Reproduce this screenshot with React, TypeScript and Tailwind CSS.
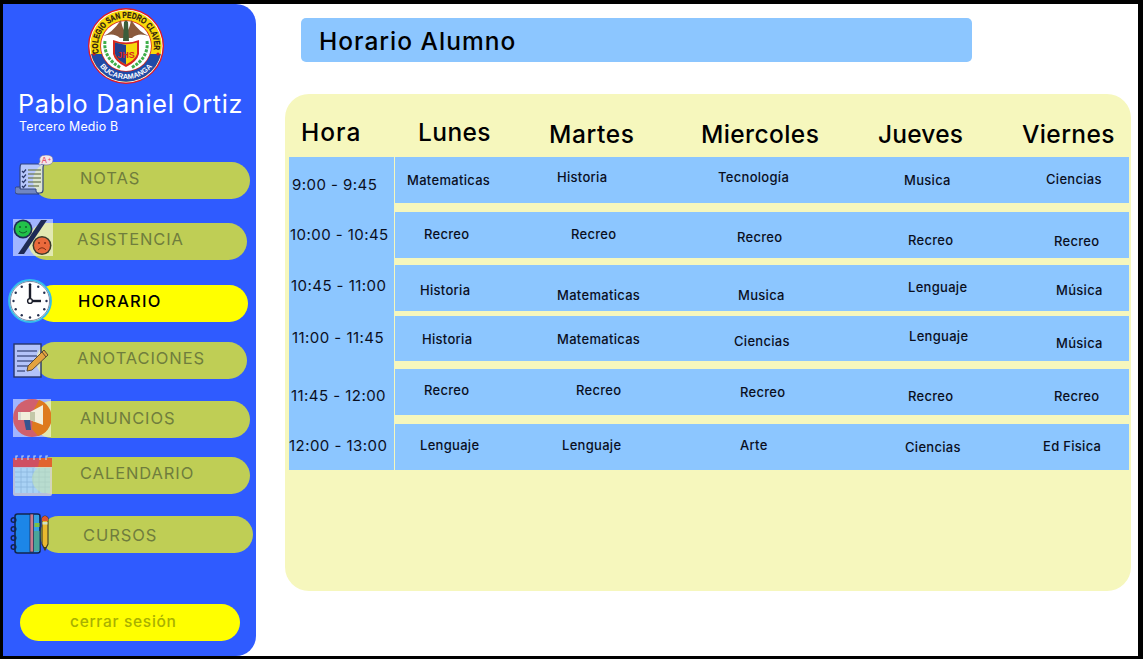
import React from "react";

function Logo() {
  return (
    <svg width="76" height="76" viewBox="0 0 76 76" className="block">
      <defs>
        <path id="logoTop" d="M11.2 46 A28 28 0 1 1 64.8 46" fill="none" />
        <path id="logoBottom" d="M10 56 A33.5 33.5 0 0 0 66 56" fill="none" />
        <clipPath id="logoLower"><rect x="0" y="46" width="76" height="30" /></clipPath>
      </defs>
      <circle cx="38" cy="38" r="38" fill="#e01b24" />
      <circle cx="38" cy="38" r="36.6" fill="#fff" />
      <circle cx="38" cy="38" r="35.8" fill="#f8d80a" />
      <circle cx="38" cy="38" r="35.8" fill="#1f4aa8" clipPath="url(#logoLower)" />
      <circle cx="6" cy="46" r="1.6" fill="#d01c1f" />
      <circle cx="70" cy="46" r="1.6" fill="#d01c1f" />
      <text fontFamily="'Liberation Sans',sans-serif" fontWeight="700" fontSize="8.6" fill="#2a1a10" stroke="#2a1a10" strokeWidth="0.25">
        <textPath href="#logoTop" startOffset="1" textLength="99" lengthAdjust="spacingAndGlyphs">COLEGIO SAN PEDRO CLAVER</textPath>
      </text>
      <text fontFamily="'Liberation Sans',sans-serif" fontWeight="700" fontSize="7.4" fill="#fff" textAnchor="middle">
        <textPath href="#logoBottom" startOffset="50%">BUCARAMANGA</textPath>
      </text>
      <circle cx="38" cy="38" r="25.8" fill="#d8261f" />
      <circle cx="38" cy="38" r="25" fill="#fff" />
      <path d="M15 36 Q24 33 33 20 Q34 27 36 30 L40 30 Q42 27 43 20 Q52 33 61 36 Q50 32 44 38 L32 38 Q26 32 15 36Z" fill="#8a5a3c" transform="translate(0 -8)" />
      <path d="M36 14 Q38 11 40 14 L41 33 L35 33Z" fill="#3b5d3a" />
      <path d="M17 33 Q15 50 33 60" fill="none" stroke="#3fae49" strokeWidth="3" strokeDasharray="3 1.2" />
      <path d="M59 33 Q61 50 43 60" fill="none" stroke="#3fae49" strokeWidth="3" strokeDasharray="3 1.2" />
      <path d="M25 32 Q38 37 51 32 L51 46 Q49 54 38 59 Q27 54 25 46Z" fill="#d8261f" />
      <path d="M27 34.5 Q38 38 49 34.5 L49 46 Q47 52 38 56.5 Q29 52 27 46Z" fill="#f5d90a" />
      <path d="M27 34.5 L38 37 L38 56.5 Q29 52 27 46Z" fill="#24408f" />
      <text x="38" y="50" textAnchor="middle" fontFamily="'Liberation Sans',sans-serif" fontWeight="700" fontSize="9" fill="#d8261f">JHS</text>
    </svg>
  );
}

function NotasIcon() {
  return (
    <svg width="40" height="42" viewBox="0 0 40 42" className="block">
      <path d="M6 9 H29 Q28 11 28 13 V35 Q28 38 25 38 H5 V13 Q5 10 6 9Z" fill="#e6ecfb" fillOpacity="0.75" stroke="#33457f" strokeWidth="1.2" />
      <path d="M5 32 H1.5 Q0 32 0 34 V37 Q0 39 3 39 H24 Q21 38 21 36 V34 L5 34Z" fill="#7186c2" stroke="#33457f" strokeWidth="1" />
      <g stroke="#2c3a6b" strokeWidth="1.2" fill="none">
        <path d="M7 16 l1.5 1.5 l2.5 -3" />
        <path d="M7 21 l1.5 1.5 l2.5 -3" />
        <path d="M7 26 l1.5 1.5 l2.5 -3" />
        <path d="M7 31 l1.5 1.5 l2.5 -3" />
      </g>
      <g stroke="#6f7a55" strokeWidth="1.3">
        <path d="M13 15 H26" /><path d="M13 19 H26" /><path d="M13 23 H26" /><path d="M13 27 H26" /><path d="M13 31 H24" />
      </g>
      <path d="M24 9 Q23 8 25 7 Q23 0 31 0 Q38 0 38 5 Q38 10 31 10 Q28 10 27 9 Q26 10 24 10Z" fill="#f3e6ea" stroke="#6a6f9e" strokeWidth="0.6" />
      <text x="26.5" y="8" fontFamily="Inter,sans-serif" fontSize="8" fill="#e0405a">A</text>
      <text x="32.5" y="5.5" fontFamily="Inter,sans-serif" fontSize="6" fill="#e0405a">+</text>
    </svg>
  );
}

function PercentIcon() {
  return (
    <svg width="40" height="37" viewBox="0 0 40 37" className="block">
      <rect x="0" y="0" width="40" height="37" fill="#ffffff" fillOpacity="0.55" />
      <path d="M34 1 L28 1 L5 35 L11 35Z" fill="#1e2a55" />
      <circle cx="10" cy="10" r="9.5" fill="#1e2a55" />
      <circle cx="10" cy="10" r="7.8" fill="#22c14a" />
      <circle cx="7" cy="8" r="1" fill="#11622a" /><circle cx="13" cy="8" r="1" fill="#11622a" />
      <path d="M6 12 Q10 16 14 12" fill="none" stroke="#11622a" strokeWidth="1" />
      <circle cx="29" cy="26.5" r="9.5" fill="#3a3a2a" />
      <circle cx="29" cy="26.5" r="8" fill="#ea6a3c" />
      <circle cx="26" cy="24" r="1" fill="#7c2a12" /><circle cx="32" cy="24" r="1" fill="#7c2a12" />
      <path d="M25 31 Q29 26.5 33 31" fill="none" stroke="#7c2a12" strokeWidth="1" />
    </svg>
  );
}

function ClockIcon() {
  const dots = Array.from({ length: 12 }, (_, i) => {
    const a = (i * Math.PI) / 6;
    return [22 + 16.5 * Math.cos(a), 22 + 16.5 * Math.sin(a)];
  });
  return (
    <svg width="44" height="44" viewBox="0 0 44 44" className="block">
      <circle cx="22" cy="22" r="21" fill="#fff" stroke="#35bdea" strokeWidth="1.8" />
      <circle cx="22" cy="22" r="19.6" fill="none" stroke="#27406f" strokeWidth="0.6" />
      {dots.map(([x, y], i) => (
        <circle key={i} cx={x} cy={y} r="1.2" fill="#26304f" />
      ))}
      <path d="M22 22 V5" stroke="#1a1d2a" strokeWidth="2.4" />
      <path d="M22 22 H33" stroke="#1a1d2a" strokeWidth="2.4" />
      <circle cx="22" cy="22" r="2.4" fill="#fff" stroke="#1a1d2a" strokeWidth="1.4" />
    </svg>
  );
}

function AnotacionesIcon() {
  return (
    <svg width="36" height="35" viewBox="0 0 36 35" className="block">
      <rect x="1" y="1" width="27" height="33" fill="#e6ebf7" fillOpacity="0.72" stroke="#27356b" strokeWidth="1.4" />
      <g stroke="#27356b" strokeWidth="1.1">
        <path d="M4 8 H24" /><path d="M4 13 H24" /><path d="M4 18 H20" /><path d="M4 23 H15" /><path d="M4 28 H12" />
      </g>
      <path d="M31 7 L35 12 L19 27 L14 28 L15 23Z" fill="#e3a33f" stroke="#5b4a32" strokeWidth="1" />
      <path d="M29 9 L33 14" stroke="#5b4a32" strokeWidth="1" />
    </svg>
  );
}

function MegaphoneIcon() {
  return (
    <svg width="38" height="38" viewBox="0 0 38 38" className="block">
      <rect x="0" y="0" width="38" height="38" fill="#fff" fillOpacity="0.55" />
      <circle cx="19" cy="19" r="19" fill="#d0606e" />
      <path d="M26 0.8 A19 19 0 0 1 25 37 L19 30 L20 12Z" fill="#de7a1e" />
      <path d="M30 6 V26 L17 21 H7 V13 H17Z" fill="#f2efdc" />
      <path d="M17 13 H22 V23 L17 21Z" fill="#c4c8a8" />
      <path d="M11 21 H17 L18 31 H13Z" fill="#35558f" />
      <rect x="5" y="13" width="3" height="8" fill="#d9d9d0" />
    </svg>
  );
}

function CalendarIcon() {
  return (
    <svg width="41" height="42" viewBox="0 0 41 42" className="block">
      <rect x="1" y="5" width="39" height="37" rx="2" fill="#d8d8d4" fillOpacity="0.8" />
      <rect x="1" y="4" width="39" height="9" fill="#cf4f62" />
      <path d="M28 4 H38 Q40 4 40 6 V13 H26Z" fill="#e1642f" />
      <rect x="3" y="14" width="35" height="25" fill="#a9d2f5" />
      <g stroke="#8bb5dd" strokeWidth="0.8">
        <path d="M3 18 H38" /><path d="M3 23 H38" /><path d="M3 28 H38" /><path d="M3 33 H38" />
        <path d="M9 14 V39" /><path d="M15 14 V39" /><path d="M21 14 V39" /><path d="M27 14 V39" /><path d="M33 14 V39" />
      </g>
      <path d="M26 14 H38 V39 H30 Q20 34 20 24 Q21 17 26 14Z" fill="#c3e2b6" fillOpacity="0.6" />
      <g stroke="#b9d4f0" strokeWidth="1.2" fill="none">
        <path d="M4 6 V2 H6" /><path d="M10 6 V2 H12" /><path d="M16 6 V2 H18" /><path d="M22 6 V2 H24" /><path d="M28 6 V2 H30" /><path d="M34 6 V2 H36" />
      </g>
    </svg>
  );
}

function CursosIcon() {
  return (
    <svg width="40" height="41" viewBox="0 0 40 41" className="block">
      <rect x="5" y="1" width="25" height="39" rx="2.5" fill="#1c86e8" stroke="#12264f" strokeWidth="1.6" />
      <rect x="20" y="2" width="9" height="37" fill="#36a0e2" />
      <path d="M20 18 H29.5 V38 H24 Z" fill="#4aa59a" />
      <rect x="20" y="1" width="3.5" height="38" fill="#c97a8c" stroke="#12264f" strokeWidth="0.7" />
      <rect x="24.5" y="10" width="5" height="4" fill="#7bc043" />
      <g fill="none" stroke="#12264f" strokeWidth="1.5">
        <circle cx="3.5" cy="7" r="2.3" /><circle cx="3.5" cy="16" r="2.3" /><circle cx="3.5" cy="25" r="2.3" /><circle cx="3.5" cy="34" r="2.3" />
      </g>
      <path d="M32 5 Q35 1 38 5 V31 L35 37 L32 31Z" fill="#eab92f" stroke="#3d3a22" strokeWidth="1.1" />
      <path d="M32 5 Q35 1 38 5 V8 H32Z" fill="#e1562f" />
      <rect x="32.5" y="9" width="5" height="2.5" fill="#cfe2c5" />
      <path d="M33.5 34 H36.5 L35 37Z" fill="#3d3a22" />
    </svg>
  );
}

type NavProps = {
  label: string;
  rowClass: string;
  pillClass: string;
  textClass: string;
  iconClass: string;
  active?: boolean;
  children: React.ReactNode;
};

function NavItem({ label, rowClass, pillClass, textClass, iconClass, active, children }: NavProps) {
  return (
    <div className={`relative ${rowClass}`}>
      <div className={`h-[37px] rounded-full flex items-center ${pillClass} ${active ? "bg-[#ffff00] text-black" : "bg-[#bfce55] text-[#6f7d3d]"}`}>
        <span className={`text-[16.5px] leading-none tracking-[0.9px] ${textClass}`}>{label}</span>
      </div>
      <div className={`absolute ${iconClass}`}>{children}</div>
    </div>
  );
}

function Sidebar() {
  return (
    <aside className="w-[253px] shrink-0 bg-[#2f5bff] rounded-r-[20px] flex flex-col pt-[4px]">
      <div className="ml-[85px]"><Logo /></div>
      <div className="ml-[15px] mt-[5px] h-[30px] text-[25.2px] leading-[30px] text-white tracking-[0.7px] whitespace-nowrap">Pablo Daniel Ortiz</div>
      <div className="ml-[16px] h-[16px] text-[12.4px] leading-[16px] text-white tracking-[0.2px] whitespace-nowrap">Tercero Medio B</div>
      <NavItem label="NOTAS" rowClass="mt-[27px]" pillClass="ml-[30px] w-[217px]" textClass="ml-[47px] mb-[4px]" iconClass="left-[12px] -top-[7px]"><NotasIcon /></NavItem>
      <NavItem label="ASISTENCIA" rowClass="mt-[24px]" pillClass="ml-[25px] w-[219px]" textClass="ml-[49px] mb-[4px]" iconClass="left-[10px] -top-[4px]"><PercentIcon /></NavItem>
      <NavItem label="HORARIO" rowClass="mt-[25px]" pillClass="ml-[32px] w-[213px]" textClass="ml-[43px] mb-[4px] font-medium tracking-[1.2px]" iconClass="left-[5px] -top-[6px]" active><ClockIcon /></NavItem>
      <NavItem label="ANOTACIONES" rowClass="mt-[20px]" pillClass="ml-[33px] w-[211px]" textClass="ml-[41px] mb-[4px]" iconClass="left-[10px] top-[1px]"><AnotacionesIcon /></NavItem>
      <NavItem label="ANUNCIOS" rowClass="mt-[22px]" pillClass="ml-[30px] w-[217px]" textClass="ml-[47px] mb-[2px]" iconClass="left-[10px] -top-[2px]"><MegaphoneIcon /></NavItem>
      <NavItem label="CALENDARIO" rowClass="mt-[19px]" pillClass="ml-[30px] w-[217px]" textClass="ml-[47px] mb-[4px]" iconClass="left-[9px] -top-[3px]"><CalendarIcon /></NavItem>
      <NavItem label="CURSOS" rowClass="mt-[22px]" pillClass="ml-[37px] w-[213px]" textClass="ml-[43px] mt-[2px]" iconClass="left-[7px] -top-[3px]"><CursosIcon /></NavItem>
      <div className="mt-[51px] ml-[17px] w-[220px] h-[37px] rounded-full bg-[#ffff00] flex items-center pl-[50px] pb-[2px] text-[15.5px] text-[#a8b000] font-medium tracking-[0.7px]">cerrar sesión</div>
    </aside>
  );
}

type Cell = { t: string; c: string };

const horas: { t: string; c: string }[] = [
  { t: "9:00 - 9:45", c: "ml-[3px] mt-[19px]" },
  { t: "10:00 - 10:45", c: "ml-[1px] mt-[32px]" },
  { t: "10:45 - 11:00", c: "ml-[2px] mt-[33px]" },
  { t: "11:00 - 11:45", c: "ml-[3px] mt-[34px]" },
  { t: "11:45 - 12:00", c: "ml-[2px] mt-[40px]" },
  { t: "12:00 - 13:00", c: "ml-[0px] mt-[32px]" },
];

const rows: { c: string; cells: Cell[] }[] = [
  {
    c: "h-[46px]",
    cells: [
      { t: "Matematicas", c: "pl-[12px] pt-[15px]" },
      { t: "Historia", c: "pl-[15px] pt-[12px]" },
      { t: "Tecnología", c: "pl-[29px] pt-[12px]" },
      { t: "Musica", c: "pl-[68px] pt-[15px]" },
      { t: "Ciencias", c: "pl-[63px] pt-[14px]" },
    ],
  },
  {
    c: "h-[46px] mt-[9px]",
    cells: [
      { t: "Recreo", c: "pl-[29px] pt-[14px]" },
      { t: "Recreo", c: "pl-[29px] pt-[14px]" },
      { t: "Recreo", c: "pl-[48px] pt-[17px]" },
      { t: "Recreo", c: "pl-[72px] pt-[20px]" },
      { t: "Recreo", c: "pl-[71px] pt-[21px]" },
    ],
  },
  {
    c: "h-[46px] mt-[7px]",
    cells: [
      { t: "Historia", c: "pl-[25px] pt-[17px]" },
      { t: "Matematicas", c: "pl-[15px] pt-[22px]" },
      { t: "Musica", c: "pl-[49px] pt-[22px]" },
      { t: "Lenguaje", c: "pl-[72px] pt-[14px]" },
      { t: "Música", c: "pl-[73px] pt-[17px]" },
    ],
  },
  {
    c: "h-[45px] mt-[5px]",
    cells: [
      { t: "Historia", c: "pl-[27px] pt-[15px]" },
      { t: "Matematicas", c: "pl-[15px] pt-[15px]" },
      { t: "Ciencias", c: "pl-[45px] pt-[17px]" },
      { t: "Lenguaje", c: "pl-[73px] pt-[12px]" },
      { t: "Música", c: "pl-[73px] pt-[19px]" },
    ],
  },
  {
    c: "h-[46px] mt-[8px]",
    cells: [
      { t: "Recreo", c: "pl-[29px] pt-[13px]" },
      { t: "Recreo", c: "pl-[34px] pt-[13px]" },
      { t: "Recreo", c: "pl-[51px] pt-[15px]" },
      { t: "Recreo", c: "pl-[72px] pt-[19px]" },
      { t: "Recreo", c: "pl-[71px] pt-[19px]" },
    ],
  },
  {
    c: "h-[46px] mt-[9px]",
    cells: [
      { t: "Lenguaje", c: "pl-[25px] pt-[13px]" },
      { t: "Lenguaje", c: "pl-[20px] pt-[13px]" },
      { t: "Arte", c: "pl-[51px] pt-[13px]" },
      { t: "Ciencias", c: "pl-[69px] pt-[15px]" },
      { t: "Ed Fisica", c: "pl-[60px] pt-[14px]" },
    ],
  },
];

const headers = [
  { t: "Hora", c: "pl-[12px] pt-[20px] tracking-[1px]" },
  { t: "Lunes", c: "pl-[23px] pt-[20px] tracking-[0.4px]" },
  { t: "Martes", c: "pl-[7px] pt-[22px] tracking-[0.6px]" },
  { t: "Miercoles", c: "pl-[12px] pt-[22px] tracking-[0.4px]" },
  { t: "Jueves", c: "pl-[42px] pt-[22px] tracking-[0.2px]" },
  { t: "Viernes", c: "pl-[39px] pt-[22px] tracking-[0.4px]" },
];

function Panel() {
  return (
    <section className="mt-[32px] w-[846px] h-[497px] bg-[#f6f7bd] rounded-[24px] pl-[4px] pr-[2px] text-[#0a0f1e]">
      <div className="h-[63px] grid grid-cols-[106px_147px_147px_147px_147px_146px]">
        {headers.map((h) => (
          <div key={h.t} className={`${h.c} text-[24.5px] leading-[36px] font-medium text-black whitespace-nowrap`}>{h.t}</div>
        ))}
      </div>
      <div className="flex gap-[1px]">
        <div className="w-[105px] h-[313px] bg-[#8cc6ff] flex flex-col">
          {horas.map((h) => (
            <div key={h.t} className={`${h.c} h-[18px] text-[15px] leading-[18px] tracking-[0.45px] whitespace-nowrap`}>{h.t}</div>
          ))}
        </div>
        <div className="w-[734px] flex flex-col">
          {rows.map((r, i) => (
            <div key={i} className={`${r.c} bg-[#8cc6ff] grid grid-cols-[147px_147px_147px_147px_146px]`}>
              {r.cells.map((cell, j) => (
                <div key={j} className={`${cell.c} text-[13px] leading-[16px] font-medium tracking-[0.3px] whitespace-nowrap`}>{cell.t}</div>
              ))}
            </div>
          ))}
        </div>
      </div>
    </section>
  );
}

export default function App() {
  return (
    <div className="w-[1143px] h-[659px] overflow-hidden bg-black pl-[3px] pt-[4px] pr-[5px] pb-[3px] font-[Inter,sans-serif]">
      <div className="w-full h-full bg-white flex">
        <Sidebar />
        <main className="flex-1 pl-[29px] pt-[14px]">
          <div className="ml-[16px] w-[671px] h-[44px] rounded-[5px] bg-[#8cc6ff] flex items-center pl-[18px] text-[24.5px] tracking-[1px] text-black font-medium"><span className="mt-[2px]">Horario Alumno</span></div>
          <Panel />
        </main>
      </div>
    </div>
  );
}
